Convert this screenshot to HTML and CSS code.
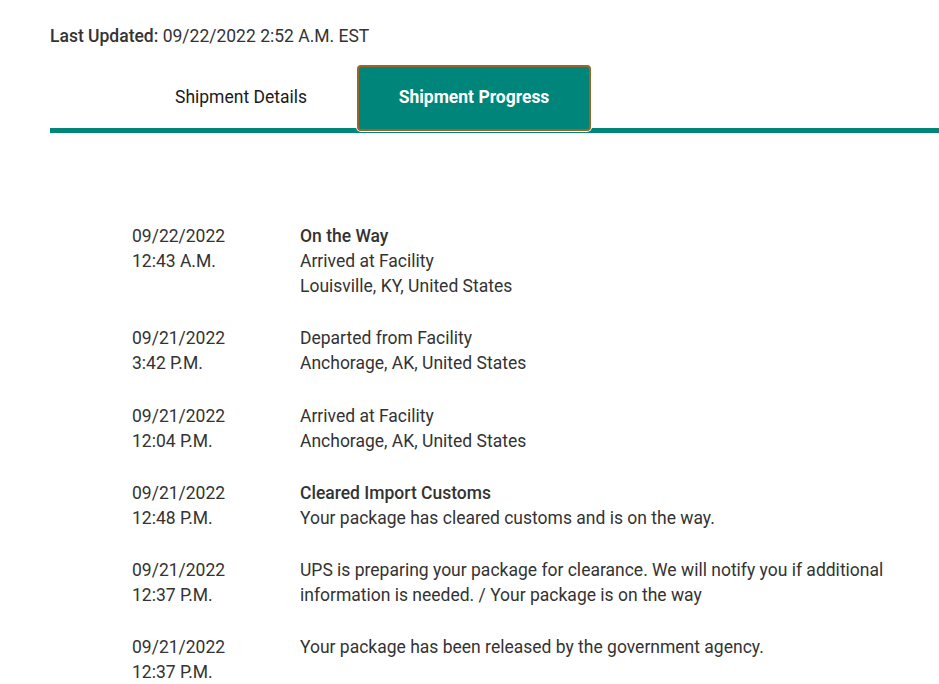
FILE: index.html
```html
<!DOCTYPE html>
<html lang="en">
<head>
<meta charset="utf-8">
<title>Shipment Progress</title>
<link rel="stylesheet" href="styles.css">
</head>
<body>
<div class="page">
  <p class="updated"><span class="label">Last Updated:</span> 09/22/2022 2:52 A.M. EST</p>
  <div class="tabs">
    <div class="tab">Shipment Details</div>
    <div class="tab active">Shipment Progress</div>
  </div>
  <div class="progress">
    <div class="row">
      <div class="when">09/22/2022<br>12:43 A.M.</div>
      <div class="what"><span class="status">On the Way</span><br>Arrived at Facility<br>Louisville, KY, United States</div>
    </div>
    <div class="row">
      <div class="when">09/21/2022<br>3:42 P.M.</div>
      <div class="what">Departed from Facility<br>Anchorage, AK, United States</div>
    </div>
    <div class="row">
      <div class="when">09/21/2022<br>12:04 P.M.</div>
      <div class="what">Arrived at Facility<br>Anchorage, AK, United States</div>
    </div>
    <div class="row">
      <div class="when">09/21/2022<br>12:48 P.M.</div>
      <div class="what"><span class="status">Cleared Import Customs</span><br>Your package has cleared customs and is on the way.</div>
    </div>
    <div class="row">
      <div class="when">09/21/2022<br>12:37 P.M.</div>
      <div class="what">UPS is preparing your package for clearance. We will notify you if additional information is needed. / Your package is on the way</div>
    </div>
    <div class="row">
      <div class="when">09/21/2022<br>12:37 P.M.</div>
      <div class="what">Your package has been released by the government agency.</div>
    </div>
  </div>
</div>
</body>
</html>
```

FILE: styles.css
```css
html, body {
  margin: 0;
  padding: 0;
  background: #fff;
}
body {
  font-family: Roboto, "Liberation Sans", Arial, sans-serif;
  color: #333;
  overflow: hidden;
}
.page {
  padding: 0 0 0 50px;
}
.updated {
  margin: 0;
  padding-top: 24px;
  font-size: 17.5px;
  line-height: 24px;
}
.updated .label {
  font-weight: 500;
}
.tabs {
  margin-top: 17px;
  display: flex;
  padding-left: 75px;
  border-bottom: 5px solid #00857a;
  height: 63px;
  position: relative;
}
.tab {
  width: 232px;
  height: 63px;
  display: flex;
  align-items: center;
  justify-content: center;
  font-size: 17.5px;
  font-weight: 400;
  color: #1a1a1a;
  box-sizing: border-box;
}
.tab.active {
  position: relative;
  width: 234px;
  height: 66px;
  background: #00857a;
  color: #fff;
  font-weight: 700;
  border: 2px solid #9c6428;
  border-radius: 4px;
  box-shadow: 0 0 0 1px #fff;
  z-index: 1;
  padding-bottom: 2px;
}
.progress {
  padding: 91px 0 0 82px;
}
.row {
  display: flex;
  font-size: 17.5px;
  line-height: 25px;
  margin-bottom: 27.3px;
}
.when {
  width: 168px;
  flex: none;
}
.what {
  width: 600px;
}
.status {
  font-weight: 500;
}
```
